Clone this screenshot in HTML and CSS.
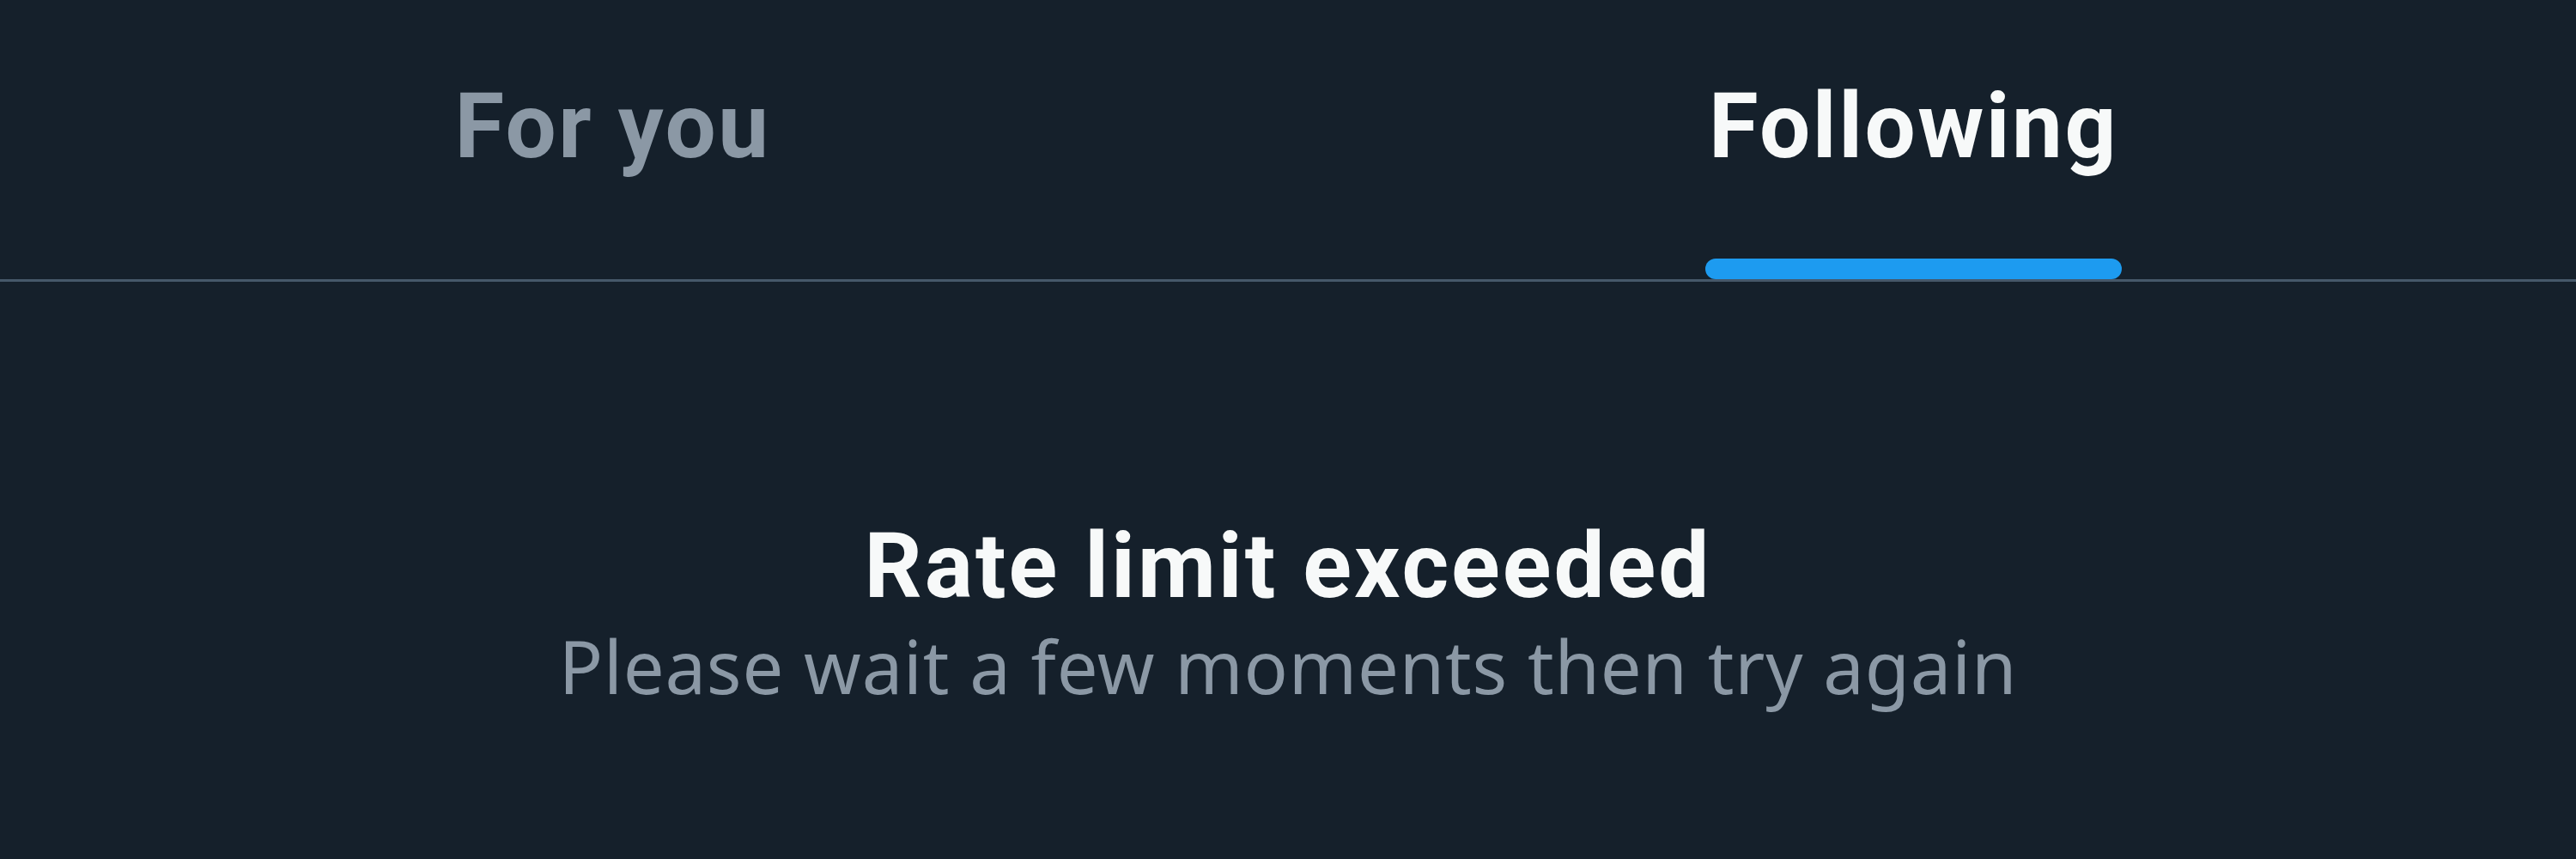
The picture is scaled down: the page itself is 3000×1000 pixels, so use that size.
FILE: index.html
```html
<!DOCTYPE html>
<html lang="en">
<head>
    <meta charset="UTF-8">
    <meta name="viewport" content="width=device-width, initial-scale=1.0">
    <title>Home</title>
    <link rel="stylesheet" href="styles.css">
</head>
<body>
    <header class="timeline-header">
        <nav class="tabs">
            <a class="tab">
                <span class="tab-inner">
                    <span class="tab-label">For you</span>
                </span>
            </a>
            <a class="tab active">
                <span class="tab-inner">
                    <span class="tab-label">Following</span>
                    <span class="tab-indicator"></span>
                </span>
            </a>
        </nav>
    </header>

    <section class="empty-state">
        <h2 class="empty-title">Rate limit exceeded</h2>
        <p class="empty-text">Please wait a few moments then try again</p>
    </section>
</body>
</html>
```
FILE: styles.css
```css
body {
    margin: 0;
    background-color: #15202b;
    color: #f7f9f9;
    font-family: Roboto, "Noto Sans", sans-serif;
}
.timeline-header {
    border-bottom: 3px solid #46586a;
}
.tabs {
    display: flex;
    margin: 0 14px 0 -44px;
    height: 325px;
}
.tab {
    flex: 1;
    display: flex;
    justify-content: center;
    cursor: pointer;
}
.tab-inner {
    display: flex;
    flex-direction: column;
    padding-top: 95px;
}
.tab-label {
    font-size: 105px;
    line-height: 105px;
    font-weight: bold;
    letter-spacing: 2.5px;
    color: #8b98a5;
    white-space: nowrap;
}
.tab.active .tab-label {
    color: #f7f9f9;
}
.tab-indicator {
    height: 24px;
    margin: auto -4px 0;
    border-radius: 12px;
    background-color: #1d9bf0;
}
.empty-state {
    padding: 279px 0 120px;
    text-align: center;
}
.empty-title {
    margin: 0;
    font-size: 105px;
    line-height: 105px;
    font-weight: bold;
    letter-spacing: 3px;
    color: #f7f9f9;
    white-space: nowrap;
}
.empty-text {
    margin: 21px 0 0;
    font-family: "Noto Sans", Roboto, sans-serif;
    font-size: 85px;
    line-height: 85px;
    letter-spacing: 0.8px;
    color: #8b98a5;
    white-space: nowrap;
}
```
